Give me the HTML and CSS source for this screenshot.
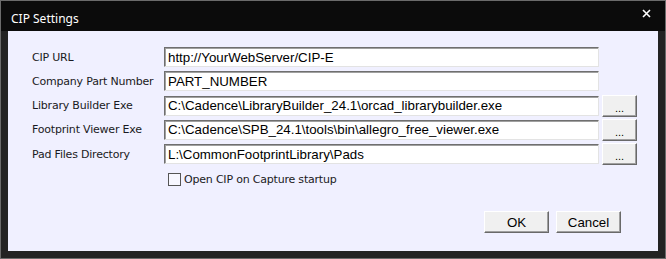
FILE: index.html
```html
<!DOCTYPE html>
<html lang="en">
<head>
  <meta charset="UTF-8">
  <title>CIP Settings</title>
  <link rel="stylesheet" href="styles.css">
</head>
<body>
  <div class="window">
    <div class="titlebar">
      <span class="title">CIP Settings</span>
      <span class="close">
        <svg width="9" height="9" viewBox="0 0 9 9"><path d="M1 1L8 8M8 1L1 8" stroke="#fff" stroke-width="1.6"/></svg>
      </span>
    </div>
    <div class="content">
      <div class="form">
        <label class="label">CIP URL</label>
        <input class="field" type="text" value="http://YourWebServer/CIP-E">
        <span></span>

        <label class="label">Company Part Number</label>
        <input class="field" type="text" value="PART_NUMBER">
        <span></span>

        <label class="label">Library Builder Exe</label>
        <input class="field" type="text" value="C:\Cadence\LibraryBuilder_24.1\orcad_librarybuilder.exe">
        <button class="btn browse">...</button>

        <label class="label">Footprint Viewer Exe</label>
        <input class="field" type="text" value="C:\Cadence\SPB_24.1\tools\bin\allegro_free_viewer.exe">
        <button class="btn browse">...</button>

        <label class="label">Pad Files Directory</label>
        <input class="field" type="text" value="L:\CommonFootprintLibrary\Pads">
        <button class="btn browse">...</button>
      </div>

      <label class="check">
        <span class="box"></span>
        <span>Open CIP on Capture startup</span>
      </label>

      <div class="actions">
        <button class="btn action">OK</button>
        <button class="btn action">Cancel</button>
      </div>
    </div>
  </div>
</body>
</html>
```

FILE: styles.css
```css
/* 全局 */
body {
  margin: 0;
  padding: 0;
  background: #fff;
}

/* 窗口 */
.window {
  width: 664px;
  height: 257px;
  border: 1px solid #6b6b6b;
  background: #232323;
  display: flex;
  flex-direction: column;
}
.titlebar {
  height: 30px;
  flex: none;
  background: #0b0b0b;
  color: #fff;
  display: flex;
  align-items: flex-start;
  justify-content: space-between;
  padding: 0 14px 0 10px;
  box-sizing: border-box;
}
.title {
  margin-top: 10px;
  font-family: "Noto Sans", "Open Sans", sans-serif;
  font-size: 12px;
  line-height: 16px;
}
.close {
  display: flex;
  margin-top: 8px;
}
.content {
  flex: 1;
  margin: 0 7px 7px 7px;
  background: #f0f0ff;
  padding: 16px 0 0 24px;
}

/* 表单 */
.form {
  display: grid;
  grid-template-columns: 129px 435px 35px;
  grid-auto-rows: 20px;
  column-gap: 3px;
  row-gap: 4.25px;
}
.label {
  font-family: "DejaVu Sans", Tahoma, sans-serif;
  font-size: 11px;
  letter-spacing: -0.2px;
  color: #1a1a22;
  align-self: center;
}
.field {
  box-sizing: border-box;
  height: 20px;
  margin: 0;
  padding: 0 3px;
  font-family: "Liberation Sans", Arial, sans-serif;
  font-size: 13.3px;
  color: #000;
  background: #fff;
  border: 1px solid;
  border-color: #6f6f6f #e3e3e3 #e3e3e3 #6f6f6f;
  box-shadow: inset 1px 1px 0 #a0a0a0;
  outline: none;
}

/* 按钮 */
.btn {
  box-sizing: border-box;
  margin: 0;
  padding: 0;
  background: #f0f0f0;
  border: 1px solid;
  border-color: #fff #696969 #696969 #fff;
  box-shadow: inset -1px -1px 0 #a0a0a0;
  font-family: "Liberation Sans", Arial, sans-serif;
  font-size: 13.3px;
  color: #000;
}
.browse {
  height: 22px;
  margin-top: -1px;
  font-size: 11px;
  line-height: 20px;
  padding-top: 2px;
}

/* 复选框 */
.check {
  display: flex;
  align-items: center;
  gap: 3px;
  margin: 9px 0 0 136px;
  font-family: "DejaVu Sans", Tahoma, sans-serif;
  font-size: 11px;
  letter-spacing: -0.2px;
  color: #1a1a22;
}
.box {
  width: 13px;
  height: 13px;
  box-sizing: border-box;
  border: 1px solid #555;
  background: #f7f7ff;
}

/* 确定/取消 */
.actions {
  display: flex;
  gap: 7px;
  margin: 25px 0 0 452px;
}
.action {
  width: 65px;
  height: 22px;
}
```
